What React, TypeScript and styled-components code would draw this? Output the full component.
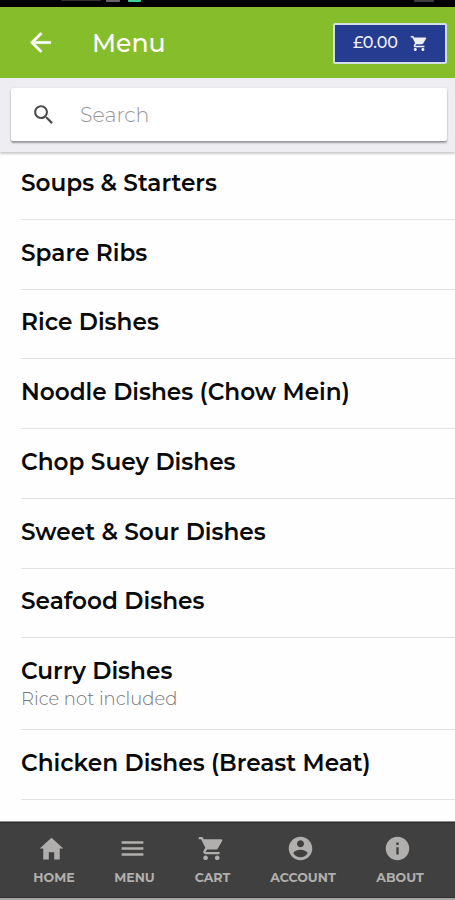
import React from 'react';
import styled, { createGlobalStyle } from 'styled-components';
import {
  IoMdArrowBack, IoMdCart, IoMdContact, IoMdHome, IoMdInformationCircle, IoMdMenu, IoMdSearch,
} from 'react-icons/io';

const GlobalStyle = createGlobalStyle`
  * { box-sizing: border-box; }
  body { margin: 0; background: #fff; font-family: Montserrat, Inter, "Open Sans", sans-serif; }
`;

const Screen = styled.div`
  display: flex;
  flex-direction: column;
  width: 455px;
  height: 900px;
  overflow: hidden;
  background: #fefefe;
`;

const StatusBar = styled.div`
  display: flex;
  flex: none;
  height: 7px;
  padding: 0 20px 0 61px;
  background: #000;
`;

const StatusMark = styled.span<{ $width: number; $height: number; $color: string; $gap?: number }>`
  width: ${p => p.$width}px;
  height: ${p => p.$height}px;
  margin-left: ${p => p.$gap ?? 0}px;
  border-radius: 0 0 1px 1px;
  background: ${p => p.$color};
`;

const Header = styled.header`
  display: flex;
  flex: none;
  align-items: center;
  height: 71px;
  padding: 0 8px 0 25px;
  background: #86bd2b;
  color: #fff;
`;

const BackIcon = styled(IoMdArrowBack)`
  stroke: currentColor;
  stroke-width: 4px;
`;

const Title = styled.h1`
  flex: 1;
  margin: 0 0 0 36px;
  font-size: 25.2px;
  font-weight: 500;
  line-height: 32px;
`;

const CartButton = styled.button`
  display: flex;
  align-items: center;
  width: 114px;
  height: 41px;
  margin-top: 1px;
  padding: 0 17px 0 18px;
  border: 2px solid #d3dfe8;
  border-radius: 2px;
  background: #263c91;
  color: #eef0fb;
  font: 500 16px/20px Montserrat, Inter, sans-serif;
  justify-content: space-between;
`;

const SearchBar = styled.div`
  flex: none;
  height: 74px;
  padding: 10px 8px 0 11px;
  background: #eeeef2;
  box-shadow: 0 2px 2px rgba(0, 0, 0, 0.2);
`;

const SearchField = styled.label`
  display: flex;
  align-items: center;
  height: 53px;
  padding-left: 20px;
  border-radius: 2px;
  background: #fff;
  box-shadow: 0 2px 2px rgba(0, 0, 0, 0.35), 0 0 2px rgba(0, 0, 0, 0.1);
  color: #4d4d4d;
`;

const SearchInput = styled.input`
  width: 300px;
  margin-left: 24px;
  padding: 0;
  border: 0;
  outline: 0;
  background: none;
  font: 300 20.6px/26px Montserrat, Inter, sans-serif;
  &::placeholder { color: #979797; opacity: 1; }
`;

const List = styled.ul`
  flex: 1;
  min-height: 0;
  margin: 0;
  padding: 0 0 0 21px;
  list-style: none;
`;

const Row = styled.li<{ $height: number; $note: boolean }>`
  display: flex;
  flex-direction: column;
  justify-content: flex-end;
  align-items: flex-start;
  height: ${p => p.$height}px;
  padding-bottom: ${p => (p.$note ? 18 : 22)}px;
  border-bottom: 1px solid #e1e1e1;
`;

const DishName = styled.span`
  color: #0a0a0a;
  font-size: 23.2px;
  font-weight: 600;
  line-height: 28px;
  white-space: nowrap;
`;

const Note = styled.span`
  margin-top: 2px;
  color: #757575;
  font-size: 18px;
  font-weight: 300;
  line-height: 24px;
`;

const TabBar = styled.nav`
  display: flex;
  flex: none;
  height: 79px;
  padding-left: 14px;
  border-top: 1px solid #8d8d8d;
  border-bottom: 2px solid #a6a6a6;
  background: #404040;
  box-shadow: inset 0 1px #303030, inset 0 -1px #303030;
`;

const Tab = styled.a<{ $width: number; $shift: number }>`
  display: flex;
  flex-direction: column;
  align-items: center;
  width: ${p => p.$width}px;
  padding-top: 12px;
  color: #b1afad;
  font-size: 12.6px;
  font-weight: 700;
  line-height: 16px;
  svg { display: block; margin: 0 ${p => p.$shift}px 7px 0; }
`;

const dishes = [
  { name: 'Soups & Starters', height: 68 },
  { name: 'Spare Ribs', height: 70 },
  { name: 'Rice Dishes', height: 69 },
  { name: 'Noodle Dishes (Chow Mein)', height: 70 },
  { name: 'Chop Suey Dishes', height: 70 },
  { name: 'Sweet & Sour Dishes', height: 70 },
  { name: 'Seafood Dishes', height: 69 },
  { name: 'Curry Dishes', height: 92, note: 'Rice not included' },
  { name: 'Chicken Dishes (Breast Meat)', height: 70 },
];

const tabs = [
  { label: 'HOME', Icon: IoMdHome, width: 80, shift: 6 },
  { label: 'MENU', Icon: IoMdMenu, width: 81, shift: 5 },
  { label: 'CART', Icon: IoMdCart, width: 75, shift: 5 },
  { label: 'ACCOUNT', Icon: IoMdContact, width: 106, shift: 5 },
  { label: 'ABOUT', Icon: IoMdInformationCircle, width: 88, shift: 5 },
];

export default function App() {
  return (
    <Screen>
      <GlobalStyle />
      <StatusBar>
        <StatusMark $width={40} $height={1} $color="#333" />
        <StatusMark $width={14} $height={2} $color="#666" $gap={5} />
        <StatusMark $width={13} $height={2} $color="#3bd39a" $gap={8} />
        <StatusMark $width={20} $height={2} $color="#3c4040" $gap={273} />
      </StatusBar>
      <Header>
        <BackIcon size={31} />
        <Title>Menu</Title>
        <CartButton>£0.00<IoMdCart size={19} /></CartButton>
      </Header>
      <SearchBar>
        <SearchField>
          <IoMdSearch size={25} />
          <SearchInput placeholder="Search" />
        </SearchField>
      </SearchBar>
      <List>
        {dishes.map(d => (
          <Row key={d.name} $height={d.height} $note={!!d.note}>
            <DishName>{d.name}</DishName>
            {d.note && <Note>{d.note}</Note>}
          </Row>
        ))}
      </List>
      <TabBar>
        {tabs.map(({ label, Icon, width, shift }) => (
          <Tab key={label} $width={width} $shift={shift}>
            <Icon size={29} />
            {label}
          </Tab>
        ))}
      </TabBar>
    </Screen>
  );
}
